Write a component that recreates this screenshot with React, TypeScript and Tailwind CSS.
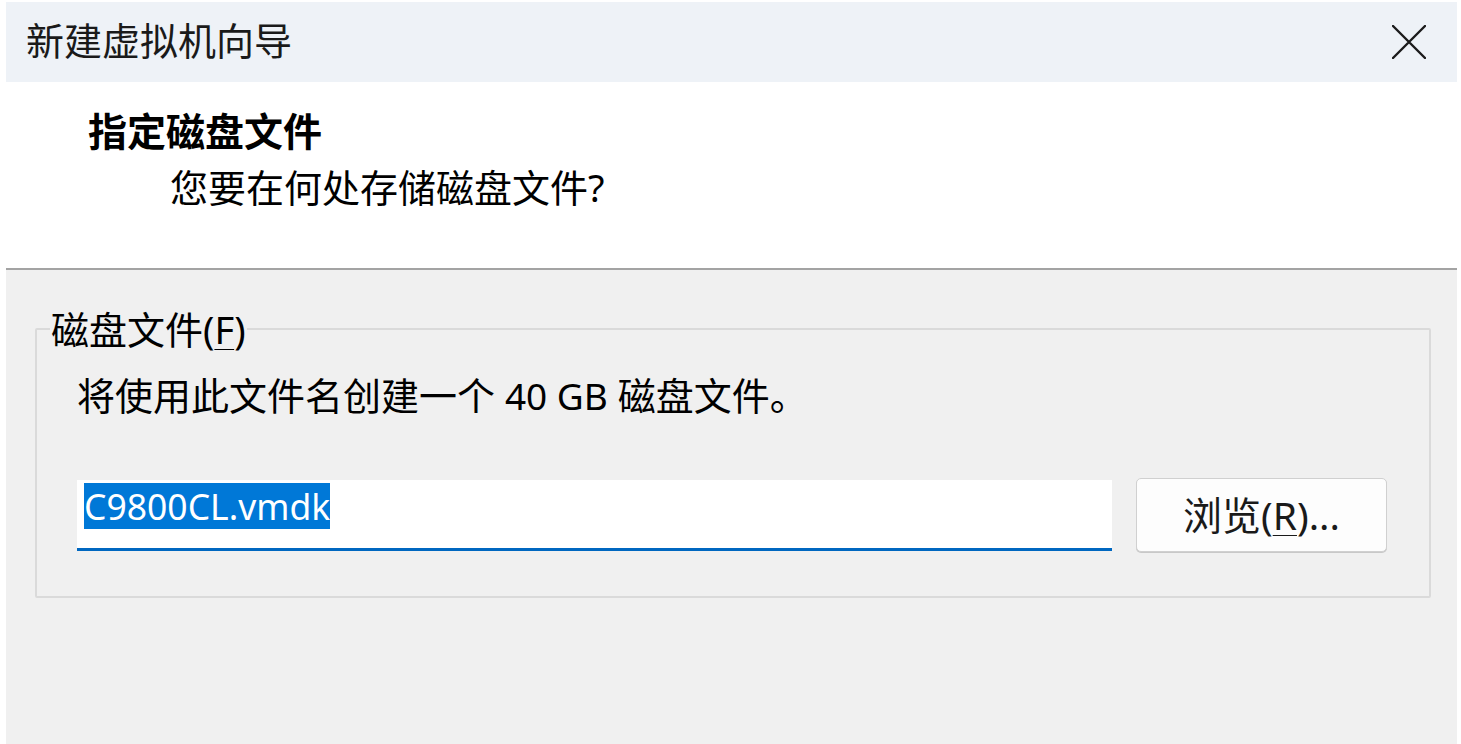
import React from "react";

const cjk = "font-['Noto_Sans','Noto_Sans_CJK_SC',sans-serif]";

const CloseIcon = () => (
  <svg width="34" height="34" viewBox="0 0 34 34" fill="none">
    <path d="M1 1 L33 33 M33 1 L1 33" stroke="#1b1b1b" strokeWidth="2.4" strokeLinecap="round" />
  </svg>
);

const NewVmWizard = () => {
  return (
    <div className={`min-h-[744px] bg-white pl-[6px] pt-[2px] ${cjk}`}>
      <div className="flex h-[742px] w-[1451px] flex-col">
        {/* title bar */}
        <div className="flex h-[80px] shrink-0 items-center justify-between bg-[#eef2f7] pl-[20px] pr-[31px]">
          <span className="pb-[4px] text-[38px] leading-none text-[#1a1a1a]">新建虚拟机向导</span>
          <CloseIcon />
        </div>

        {/* header */}
        <div className="flex h-[186px] shrink-0 flex-col bg-white pl-[82px] pt-[24px]">
          <h1 className="text-[39px] font-bold leading-[50px] text-black">指定磁盘文件</h1>
          <p className="pl-[82px] pt-[6px] text-[38px] leading-[50px] text-black">您要在何处存储磁盘文件?</p>
        </div>
        <div className="h-[2px] shrink-0 bg-[#a3a3a3]" />

        {/* body */}
        <div className="flex flex-1 flex-col bg-[#f0f0f0] pl-[29px] pr-[26px] pt-[36px]">
          <fieldset className="h-[292px] rounded-[2px] border-2 border-[#dadada] pl-[13px] pr-[42px]">
            <legend className="px-[1px] text-[38px] leading-[46px] text-black">
              磁盘文件(<span className="underline decoration-1 underline-offset-[5px]">F</span>)
            </legend>
            <div className="pl-[27px]">
              <p className="pt-[18px] text-[38px] leading-[50px] text-black">
                将使用此文件名创建一个 <span className="font-['Noto_Sans',sans-serif] text-[37px]">40 GB</span> 磁盘文件。
              </p>
              <div className="mt-[57px] flex items-center gap-[24px]">
                <div className="flex h-[71px] flex-1 items-start border-b-[3px] border-[#0067c0] bg-white pl-[7px] pt-[3px]">
                  <span className="bg-[#0078d7] font-['Noto_Sans',sans-serif] text-[35.5px] leading-[46px] text-white">
                    C9800CL.vmdk
                  </span>
                </div>
                <button className="flex h-[74px] w-[251px] items-center justify-center rounded-[5px] border border-[#d0d0d0] bg-[#fdfdfd] text-[39px] text-[#1a1a1a] shadow-[0_1px_0_#c8c8c8]">
                  浏览(<span className="underline decoration-1 underline-offset-[5px]">R</span>)...
                </button>
              </div>
            </div>
          </fieldset>
        </div>
      </div>
    </div>
  );
};

export default function App() {
  return <NewVmWizard />;
}
